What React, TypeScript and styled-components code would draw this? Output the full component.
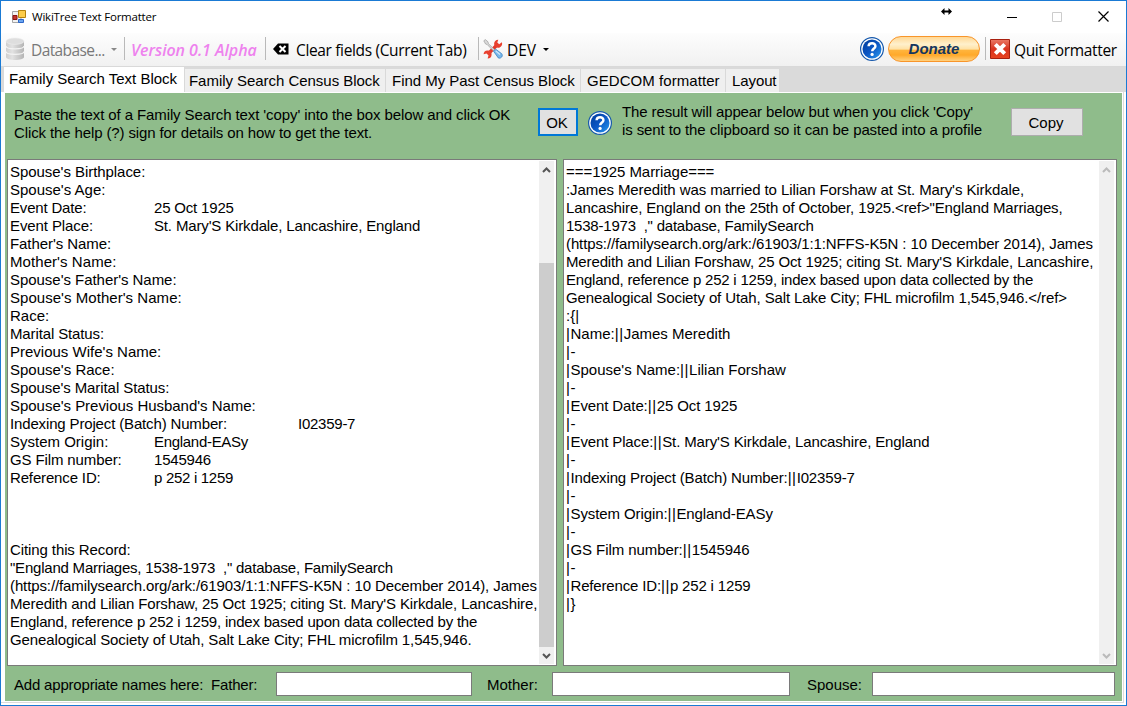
import React from "react";
import styled, { createGlobalStyle } from "styled-components";

const Global = createGlobalStyle`
  * { box-sizing: border-box; }
  body { margin: 0; font-family: "Liberation Sans", Arial, sans-serif; font-size: 15px; color: #000; }
`;

const Window = styled.div`
  width: 1127px; height: 706px; display: flex; flex-direction: column;
  border: 1px solid #1a7ad4; background: #fff; overflow: hidden;
`;
const TitleBar = styled.header`
  height: 32px; flex: none; display: flex; align-items: center; padding: 0 0 1px 11px;
  font: 11.5px "Open Sans", sans-serif;
`;
const TitleText = styled.span`
  margin-left: 6px; letter-spacing: -0.22px; white-space: nowrap;
`;
const ResizeGlyph = styled.svg` margin-left: auto; margin-bottom: 11px; `;
const Controls = styled.div` display: flex; width: 137px; margin-left: 37px; align-items: center; padding-left: 18px; `;
const ControlIcon = styled.svg` margin-right: 35px; flex: none; `;

const Toolbar = styled.div`
  height: 33px; flex: none; display: flex; align-items: center; padding: 0 9px 2px 4px;
  background: linear-gradient(#fdfdfd, #f1f1f1);
  font: 15.5px "Open Sans", sans-serif; white-space: nowrap;
  svg { flex: none; }
`;
const ToolText = styled.span<{ $l?: number; $w: number; $ls?: number; $color?: string; $accent?: boolean }>`
  margin-left: ${p => p.$l || 0}px; padding-top: 3px;
  width: ${p => p.$w}px; flex: none; letter-spacing: ${p => p.$ls || 0}px; color: ${p => p.$color || "#000"};
  ${p => p.$accent && "font-size: 16px; font-weight: 600; font-style: italic;"}
`;
const Caret = styled.i<{ $color: string }>`
  border: 3px solid transparent; border-top-color: ${p => p.$color}; border-bottom: 0; flex: none; margin-top: 2px;
`;
const Separator = styled.i<{ $l: number; $r: number }>`
  width: 1px; height: 23px; background: #b9b9b9; margin: 0 ${p => p.$r}px 0 ${p => p.$l}px; flex: none;
`;
const Spacer = styled.i` flex: 1; `;
const Donate = styled.button`
  width: 92px; height: 26px; margin: 0 0 0 4px; padding: 0 0 1px; border: 1px solid #f8952a; border-radius: 13px;
  background: linear-gradient(#ffd894 0, #fff0cc 30%, #ffe2a6 50%, #ffb43c 56%, #ffa92a 75%, #ffd180 100%);
  color: #15365f; font: italic bold 15px "Liberation Sans", sans-serif; flex: none;
`;

const Tabs = styled.nav`
  height: 26px; flex: none; display: flex; background: #dadada; padding-left: 3px;
  align-items: flex-end; border-top: 1px solid #d9d9d9;
`;
const Tab = styled.div<{ $w: number; $l: number; $ls: number; $active?: boolean }>`
  width: ${p => p.$w}px; height: ${p => (p.$active ? 25 : 23)}px; flex: none;
  line-height: 24px; padding-left: ${p => p.$l}px;
  background: ${p => (p.$active ? "#fff" : "#efefef")}; border-right: 1px solid #d9d9d9;
  letter-spacing: ${p => p.$ls}px; white-space: nowrap;
`;
const Frame = styled.div`
  flex: 1; min-height: 0; display: flex; padding: 1px 1px 1px 4px; margin: 0 2px 2px 0;
  border: solid #dcdcdc; border-width: 0 1px 1px 0;
`;
const Page = styled.main`
  flex: 1; min-width: 0; display: flex; flex-direction: column; background: #8fbc8b;
  padding: 0 5px 0 2px;
`;
const Instructions = styled.section` height: 66px; flex: none; display: flex; align-items: flex-start; `;
const Note = styled.div<{ $l: number; $w: number; $t: number }>`
  margin-left: ${p => p.$l}px; width: ${p => p.$w}px; padding-top: ${p => p.$t}px; line-height: 18px; flex: none;
`;
const TextLine = styled.div<{ $ls?: number }>`
  letter-spacing: ${p => p.$ls || 0}px; white-space: pre; height: 18px; tab-size: 144px;
`;
const Value = styled.span<{ $ls: number }>` letter-spacing: ${p => p.$ls}px; `;
const Pipe = styled.span` letter-spacing: 0.6px; `;
const Button = styled.button<{ $w: number; $primary?: boolean }>`
  width: ${p => p.$w}px; height: 28px; margin-top: 15px; padding: 1px 2px 0 0; flex: none;
  font: 15px "Liberation Sans", sans-serif; background: #e1e1e1; color: #000;
  border: ${p => (p.$primary ? "2px solid #0078d7" : "1px solid #adadad")};
`;
const Panes = styled.section` height: 507px; flex: none; display: flex; gap: 6px; `;
const Pane = styled.div<{ $w: number }>`
  width: ${p => p.$w}px; flex: none; background: #fff; border: 1px solid #7a7a7a; display: flex; padding: 1px 2px 1px 1px;
`;
const PaneText = styled.div` flex: 1; min-width: 0; padding: 2px 0 0 1px; line-height: 18px; `;
const Scroll = styled.div`
  width: 15px; flex: none; background: #f0f0f0; display: flex; flex-direction: column;
  justify-content: space-between; align-items: center;
`;
const Thumb = styled.div` width: 15px; height: 384px; background: #cdcdcd; margin-top: 84px; `;
const Arrow = styled.svg` flex: none; `;
const Names = styled.footer` flex: 1; display: flex; align-items: center; padding: 1px 0 0 7px; `;
const Label = styled.label<{ $w: number; $ls?: number }>`
  width: ${p => p.$w}px; flex: none; white-space: pre; letter-spacing: ${p => p.$ls || 0}px;
`;
const Input = styled.input<{ $w: number; $r: number }>`
  width: ${p => p.$w}px; height: 24px; border: 1px solid #7a7a7a; background: #fff;
  margin: 0 ${p => p.$r}px 0 0; padding: 0; flex: none; outline: 0;
`;

const HelpIcon = () => (
  <svg width="24" height="24" viewBox="0 0 24 24">
    <defs>
      <linearGradient id="helpBlue" x1="0" y1="0" x2="1" y2="1">
        <stop offset="0" stopColor="#003c9a" /><stop offset=".5" stopColor="#0b56c4" /><stop offset="1" stopColor="#2a9bf0" />
      </linearGradient>
    </defs>
    <circle cx="12" cy="12" r="11.400" fill="#fff" stroke="#1558ac" strokeWidth="1.200" />
    <circle cx="12" cy="12" r="9.500" fill="url(#helpBlue)" />
    <path d="M8.600 9.300C8.700 5.200 15.600 5.200 15.400 9.200C15.300 11.500 12.300 11.600 12.200 14.300" fill="none" stroke="#fff" strokeWidth="2.500" />
    <circle cx="12.100" cy="17.400" r="1.600" fill="#fff" />
  </svg>
);

const DatabaseIcon = () => (
  <svg width="20" height="24" viewBox="0 0 20 24">
    <defs>
      <linearGradient id="disk"><stop offset="0" stopColor="#cfcfcf" /><stop offset=".35" stopColor="#e2e2e2" /><stop offset="1" stopColor="#b4b4b4" /></linearGradient>
    </defs>
    <path d="M1 4V20C1 24 19 24 19 20V4Z" fill="url(#disk)" />
    <path d="M1 9C1 12.800 19 12.800 19 9M1 14.500C1 18.300 19 18.300 19 14.500" fill="none" stroke="#f3f3f3" strokeWidth="1.200" />
    <ellipse cx="10" cy="4.200" rx="9" ry="3.200" fill="#dedede" stroke="#efefef" strokeWidth=".6" />
  </svg>
);

const ToolsIcon = () => (
  <svg width="20" height="20" viewBox="0 0 20 20">
    <path d="M5 15L15 5" stroke="#e4392b" strokeWidth="3.400" />
    <path d="M18.800 3.200A4 4 0 1 1 15.300 .8L14.300 3.600L16.200 5.300Z" fill="#e8402f" />
    <path d="M.6 15.200A4 4 0 1 1 4.600 19.400L5.500 16.400L3.600 14.600Z" fill="#e8402f" />
    <path d="M.8 1.800L2.300 .6L5 2.800L5.300 4.600L11.500 10.600L10.300 11.800L4.200 5.500L2.600 5Z" fill="#dadada" stroke="#9b9b9b" strokeWidth=".7" />
    <path d="M10.500 12.200L12.700 10.200L18.700 14.700C20.400 17 18 20 15.300 18.900Z" fill="#79b8ea" stroke="#3a82c4" strokeWidth=".8" />
    <path d="M12.800 12L17 15.500" stroke="#cfe8fb" strokeWidth="1.200" />
  </svg>
);

const QuitIcon = () => (
  <svg width="20" height="20" viewBox="0 0 20 20">
    <defs><linearGradient id="quitRed" x1="0" y1="0" x2="0" y2="1"><stop offset="0" stopColor="#ea7a66" /><stop offset=".5" stopColor="#d93420" /><stop offset="1" stopColor="#e8431f" /></linearGradient></defs>
    <path d="M.5 .5H19.500V19.500H.5Z" fill="url(#quitRed)" stroke="#a8200f" />
    <path d="M5.300 5.300L14.700 14.700M14.700 5.300L5.300 14.700" stroke="#fff" strokeWidth="4" />
  </svg>
);

type Line = { text: string; ls?: number; value?: string; valueLs?: number };

const citation: Line[] = [
  { text: "(https://familysearch.org/ark:/61903/1:1:NFFS-K5N : 10 December 2014), James", ls: -0.11 },
  { text: "Meredith and Lilian Forshaw, 25 Oct 1925; citing St. Mary'S Kirkdale, Lancashire,", ls: -0.135 },
  { text: "England, reference p 252 i 1259, index based upon data collected by the", ls: -0.21 },
];

const source: Line[] = [
  { text: "Spouse's Birthplace:", ls: -0.05 },
  { text: "Spouse's Age:" },
  { text: "Event Date:", ls: -0.18, value: "25 Oct 1925", valueLs: -0.18 },
  { text: "Event Place:", ls: -0.1, value: "St. Mary'S Kirkdale, Lancashire, England", valueLs: -0.15 },
  { text: "Father's Name:", ls: -0.07 },
  { text: "Mother's Name:", ls: 0.07 },
  { text: "Spouse's Father's Name:", ls: -0.04 },
  { text: "Spouse's Mother's Name:", ls: 0.04 },
  { text: "Race:" },
  { text: "Marital Status:", ls: -0.13 },
  { text: "Previous Wife's Name:" },
  { text: "Spouse's Race:" },
  { text: "Spouse's Marital Status:", ls: -0.08 },
  { text: "Spouse's Previous Husband's Name:", ls: -0.03 },
  { text: "Indexing Project (Batch) Number:", ls: -0.15, value: "I02359-7", valueLs: -0.25 },
  { text: "System Origin:", value: "England-EASy", valueLs: -0.3 },
  { text: "GS Film number:", ls: -0.12, value: "1545946", valueLs: -0.2 },
  { text: "Reference ID:", ls: -0.15, value: "p 252 i 1259", valueLs: -0.3 },
  { text: "" }, { text: "" }, { text: "" },
  { text: "Citing this Record:", ls: -0.1 },
  { text: "\"England Marriages, 1538-1973  ,\" database, FamilySearch", ls: -0.215 },
  ...citation,
  { text: "Genealogical Society of Utah, Salt Lake City; FHL microfilm 1,545,946.", ls: -0.115 },
];

const result: Line[] = [
  { text: "===1925 Marriage===", ls: -0.05 },
  { text: ":James Meredith was married to Lilian Forshaw at St. Mary's Kirkdale,", ls: -0.085 },
  { text: "Lancashire, England on the 25th of October, 1925.<ref>\"England Marriages,", ls: -0.125 },
  { text: "1538-1973  ,\" database, FamilySearch", ls: -0.22 },
  ...citation,
  { text: "Genealogical Society of Utah, Salt Lake City; FHL microfilm 1,545,946.</ref>", ls: -0.105 },
  { text: ":{|" },
  { text: "|Name:||James Meredith" },
  { text: "|-" },
  { text: "|Spouse's Name:||Lilian Forshaw" },
  { text: "|-" },
  { text: "|Event Date:||25 Oct 1925", ls: -0.11 },
  { text: "|-" },
  { text: "|Event Place:||St. Mary'S Kirkdale, Lancashire, England", ls: -0.125 },
  { text: "|-" },
  { text: "|Indexing Project (Batch) Number:||I02359-7", ls: -0.145 },
  { text: "|-" },
  { text: "|System Origin:||England-EASy", ls: -0.1 },
  { text: "|-" },
  { text: "|GS Film number:||1545946", ls: -0.08 },
  { text: "|-" },
  { text: "|Reference ID:||p 252 i 1259", ls: -0.165 },
  { text: "|}" },
];

const Lines = ({ lines }: { lines: Line[] }) => (
  <PaneText>
    {lines.map((line, i) => (
      <TextLine key={i} $ls={line.ls}>
        {line.text.split(/(\|+)/).map((part, j) => (part.startsWith("|") ? <Pipe key={j}>{part}</Pipe> : part))}
        {line.value && <>{"\t"}<Value $ls={line.valueLs || 0}>{line.value}</Value></>}
      </TextLine>
    ))}
  </PaneText>
);

const Chevron = ({ up, color }: { up?: boolean; color: string }) => (
  <Arrow width="15" height="17" viewBox="0 0 15 17">
    <path d={up ? "M4 11L7.500 7.500L11 11" : "M4 7L7.500 10.500L11 7"} fill="none" stroke={color} strokeWidth="2" />
  </Arrow>
);

export default function App() {
  return (
    <Window>
      <Global />
      <TitleBar>
        <svg width="14" height="14" viewBox="0 0 14 14">
          <path d="M.5 1.500H9V12.500H.5Z" fill="#f2f2f2" stroke="#a5a5a5" />
          <path d="M1 5.500H5V9.500H1Z" fill="#c3362e" stroke="#8d1512" />
          <path d="M6.500 .5H13.500V7.500H6.500Z" fill="#fdcd4c" stroke="#b5830f" />
          <path d="M6.500 9.500H11.500V12.500H6.500Z" fill="#6aa5f0" stroke="#2d66c8" />
        </svg>
        <TitleText>WikiTree Text Formatter</TitleText>
        <ResizeGlyph width="11" height="7" viewBox="0 0 11 7">
          <path d="M0 3.500L3.500 0V7ZM11 3.500L7.500 0V7Z" /><path d="M2 3.500H9" stroke="#000" strokeWidth="2" />
        </ResizeGlyph>
        <Controls>
          <ControlIcon width="10" height="10"><path d="M0 5.500H10" stroke="#000" /></ControlIcon>
          <ControlIcon width="10" height="10"><path d="M.5 .5H9.500V9.500H.5Z" stroke="#ccc" fill="none" /></ControlIcon>
          <ControlIcon width="12" height="11"><path d="M1.500 .5L11.500 10.500M11.500 .5L1.500 10.500" stroke="#000" strokeWidth="1.200" /></ControlIcon>
        </Controls>
      </TitleBar>
      <Toolbar>
        <DatabaseIcon />
        <ToolText $l={6} $w={80} $ls={-0.6} $color="#787878">Database...</ToolText>
        <Caret $color="#888" />
        <Separator $l={7} $r={6} />
        <ToolText $w={134} $ls={-0.05} $accent $color="#ee82ee">Version 0.1 Alpha</ToolText>
        <Separator $l={0} $r={7} />
        <svg width="16" height="12" viewBox="0 0 16 12">
          <path d="M0 6L5 .5H15.500V11.500H5Z" />
          <path d="M6.500 3L12.500 9M12.500 3L6.500 9" stroke="#fff" strokeWidth="2" />
        </svg>
        <ToolText $l={7} $w={182} $ls={-0.35}>Clear fields (Current Tab)</ToolText>
        <Separator $l={0} $r={4} />
        <ToolsIcon />
        <ToolText $l={4} $w={36} $ls={-0.1}>DEV</ToolText>
        <Caret $color="#000" />
        <Spacer />
        <HelpIcon />
        <Donate>Donate</Donate>
        <Separator $l={5} $r={4} />
        <QuitIcon />
        <ToolText $l={4} $w={103} $ls={-0.36}>Quit Formatter</ToolText>
      </Toolbar>
      <Tabs>
        <Tab $w={181} $l={5} $ls={0} $active>Family Search Text Block</Tab>
        <Tab $w={201} $l={4} $ls={-0.04}>Family Search Census Block</Tab>
        <Tab $w={195} $l={6} $ls={-0.03}>Find My Past Census Block</Tab>
        <Tab $w={145} $l={6} $ls={0.06}>GEDCOM formatter</Tab>
        <Tab $w={54} $l={6} $ls={-0.1}>Layout</Tab>
      </Tabs>
      <Frame>
        <Page>
          <Instructions>
            <Note $l={7} $w={524} $t={13}>
              <TextLine $ls={-0.105}>Paste the text of a Family Search text 'copy' into the box below and click OK</TextLine>
              <TextLine $ls={-0.12}>Click the help (?) sign for details on how to get the text.</TextLine>
            </Note>
            <Button $w={40} $primary>OK</Button>
            <Note $l={10} $w={24} $t={18}><HelpIcon /></Note>
            <Note $l={10} $w={389} $t={10}>
              <TextLine $ls={-0.12}>The result will appear below but when you click 'Copy'</TextLine>
              <TextLine $ls={-0.105}>is sent to the clipboard so it can be pasted into a profile</TextLine>
            </Note>
            <Button $w={72}>Copy</Button>
          </Instructions>
          <Panes>
            <Pane $w={550}>
              <Lines lines={source} />
              <Scroll><Chevron up color="#555" /><Thumb /><Chevron color="#555" /></Scroll>
            </Pane>
            <Pane $w={554}>
              <Lines lines={result} />
              <Scroll><Chevron up color="#bbb" /><Chevron color="#bbb" /></Scroll>
            </Pane>
          </Panes>
          <Names>
            <Label $w={262} $ls={-0.19}>Add appropriate names here:  Father:</Label><Input $w={196} $r={15} />
            <Label $w={65}>Mother:</Label><Input $w={238} $r={17} />
            <Label $w={65}>Spouse:</Label><Input $w={243} $r={0} />
          </Names>
        </Page>
      </Frame>
    </Window>
  );
}
